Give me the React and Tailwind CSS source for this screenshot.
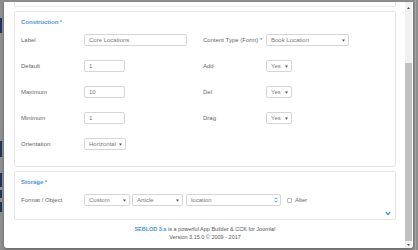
import React from 'react';

const Caret = () => (
  <svg width="3" height="3" viewBox="0 0 3 3" className="shrink-0">
    <polygon points="0,0.5 3,0.5 1.5,2.7" fill="#555" />
  </svg>
);

const Input = ({ value, w }) => (
  <div className={`${w} h-[12px] border border-[#d6d6d6] rounded-[2px] flex items-center pl-[4px] text-[#777]`}>
    {value}
  </div>
);

const Select = ({ value, w }) => (
  <div className={`${w} h-[12px] border border-[#d6d6d6] rounded-[2px] flex items-center justify-between pl-[4px] pr-[3px] text-[#777]`}>
    <span>{value}</span>
    <Caret />
  </div>
);

const Label = ({ children }) => <div className="text-[#666]">{children}</div>;

export default function App() {
  return (
    <div className="w-[418px] h-[250px] bg-[#8f8f8f] flex overflow-hidden font-['Liberation_Sans',Arial,sans-serif] text-[6px] leading-[8px]">
      {/* dimmed page behind the modal */}
      <div className="w-[4px] flex flex-col">
        <div className="h-[18px]" />
        <div className="w-[2px] h-[15px] bg-[#1d365a]" />
        <div className="h-[108px]" />
        <div className="w-[2px] h-[16px] bg-[#1d365a]" />
        <div className="h-[16px]" />
        <div className="w-[2px] h-[14px] bg-[#1d365a]" />
        <div className="h-[3px]" />
        <div className="w-[2px] h-[8px] bg-[#1d365a]" />
        <div className="h-[4px]" />
        <div className="w-[2px] h-[10px] bg-[#1d365a]" />
      </div>

      <div className="w-[409px] h-[246px] mt-[2px] bg-white rounded-b-[3px] shadow-[0_1px_3px_rgba(0,0,0,0.35)] flex">
        <div className="flex-1 flex flex-col pl-[10px] pr-[9px]">
          <div className="h-[5px] border-x border-b border-[#e6e6e6] rounded-b-[2px]" />

          {/* Construction */}
          <div className="mt-[4px] h-[156px] border border-[#e6e6e6] rounded-[2px] pt-[6px] px-[6px]">
            <div className="font-bold text-[#4a94dc]">
              Construction <span className="text-[5px] align-top">*</span>
            </div>
            <div className="mt-[8px] grid grid-cols-[63px_119px_63px_1fr] gap-y-[14px] items-center">
              <Label>Label</Label>
              <Input value="Core Locations" w="w-[103px]" />
              <Label>Content Type (Form) *</Label>
              <Select value="Book Location" w="w-[83px]" />

              <Label>Default</Label>
              <Input value="1" w="w-[41px]" />
              <Label>Add</Label>
              <Select value="Yes" w="w-[26px]" />

              <Label>Maximum</Label>
              <Input value="10" w="w-[41px]" />
              <Label>Del</Label>
              <Select value="Yes" w="w-[26px]" />

              <Label>Minimum</Label>
              <Input value="1" w="w-[41px]" />
              <Label>Drag</Label>
              <Select value="Yes" w="w-[26px]" />

              <Label>Orientation</Label>
              <Select value="Horizontal" w="w-[42px]" />
              <div />
              <div />
            </div>
          </div>

          {/* Storage */}
          <div className="relative mt-[4px] h-[49px] border border-[#e6e6e6] rounded-[2px] pt-[6px] px-[6px]">
            <div className="font-bold text-[#4a94dc]">
              Storage <span className="text-[5px] align-top">*</span>
            </div>
            <div className="mt-[8px] flex items-center">
              <div className="w-[63px] text-[#666]">Format / Object</div>
              <Select value="Custom" w="w-[46px]" />
              <div className="w-[2px]" />
              <Select value="Article" w="w-[51px]" />
              <div className="w-[3px]" />
              <div className="w-[95px] h-[12px] border border-[#d6d6d6] rounded-[2px] flex items-center justify-between pl-[4px] pr-[2px] text-[#777]">
                <span>location</span>
                <svg width="4" height="6" viewBox="0 0 4 6">
                  <polyline points="0.5,2.3 2,0.8 3.5,2.3" fill="none" stroke="#4a94dc" strokeWidth="0.9" />
                  <polyline points="0.5,3.7 2,5.2 3.5,3.7" fill="none" stroke="#4a94dc" strokeWidth="0.9" />
                </svg>
              </div>
              <div className="ml-[6px] w-[5px] h-[5px] border border-[#bbb] rounded-[1px]" />
              <span className="ml-[3px] text-[#666]">Alter</span>
            </div>
            <svg width="6" height="5" viewBox="0 0 6 5" className="absolute right-[4px] bottom-[3px]">
              <polyline points="0.8,1 3,3.4 5.2,1" fill="none" stroke="#4a94dc" strokeWidth="1.4" />
            </svg>
          </div>

          {/* footer */}
          <div className="mt-[5px] text-center text-[5.5px] leading-[8px] text-[#555]">
            <div>
              <span className="font-bold text-[#4a94dc]">SEBLOD 3.x</span> is a powerful App Builder &amp; CCK for Joomla!
            </div>
            <div>Version 3.15.0 © 2009 - 2017</div>
          </div>
        </div>

        {/* scrollbar */}
        <div className="w-[7px] mr-[1px] bg-[#f1f1f1] flex flex-col items-center">
          <div className="h-[10px] flex items-center justify-center pt-[2px]">
            <svg width="3" height="2" viewBox="0 0 3 2">
              <polygon points="0,2 3,2 1.5,0" fill="#505050" />
            </svg>
          </div>
          <div className="h-[51px]" />
          <div className="w-[7px] h-[178px] bg-[#c1c1c1]" />
          <div className="flex-1 flex items-center justify-center">
            <svg width="3" height="2" viewBox="0 0 3 2">
              <polygon points="0,0 3,0 1.5,2" fill="#505050" />
            </svg>
          </div>
        </div>
      </div>

      <div className="flex-1 flex">
        <div className="w-[2px]" />
        <div className="w-[1px] h-full bg-[#a3a3a3]" />
      </div>
    </div>
  );
}
